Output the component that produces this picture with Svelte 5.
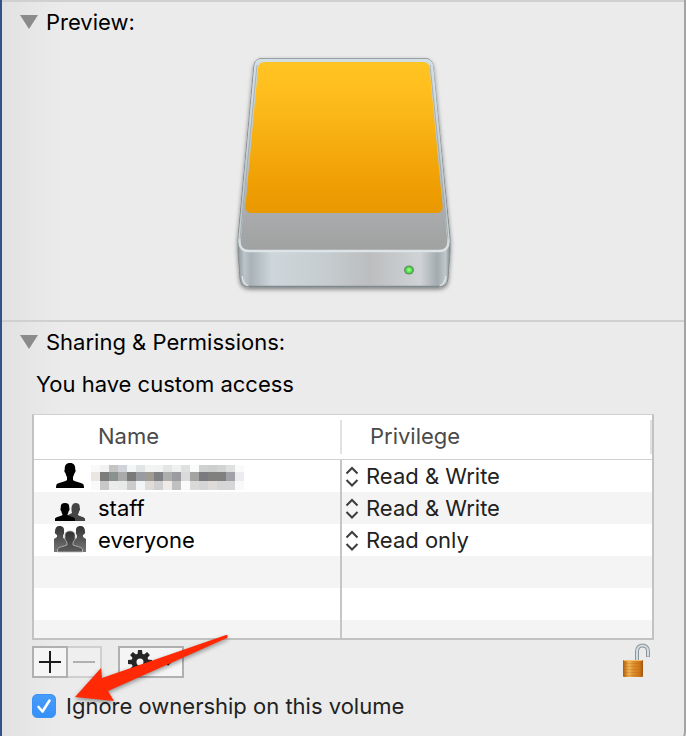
<script>
  let ignoreOwnership = $state(true);
  let previewOpen = $state(true);
  let sharingOpen = $state(true);

  let entries = $state([
    { icon: 'user', name: '', privilege: 'Read & Write' },
    { icon: 'group', name: 'staff', privilege: 'Read & Write' },
    { icon: 'everyone', name: 'everyone', privilege: 'Read only' }
  ]);

  const privileges = ['Read & Write', 'Read only', 'Write only (Drop Box)', 'No Access'];

  // Pixelated user name, one colour per mosaic tile
  const tileWidth = 9;
  const mosaic = [
    { y: 0, height: 7, tiles: ['#f9f9f9', '#f2f2f2', '#c4c5c2', '#d0d3da', '#f4f5f5', '#e2e5e5', '#f3f3f3', '#f1f2f2', '#e4e6e6', '#f0f0f0', '#dfe1e1', '#fafbfb', '#cfd1d0', '#cccfce', '#d1d4d3', '#dfe0e0', '#f9fafa'] },
    { y: 7, height: 9, tiles: ['#eae6e1', '#7c7c7b', '#8a9291', '#aaaaab', '#7a7a7a', '#999ba3', '#a09b93', '#7e8082', '#acadad', '#9a9ca0', '#dadada', '#a3a3a1', '#7b7b7f', '#80817f', '#80817e', '#a1a2a9', '#eaecf0'] },
    { y: 16, height: 9, tiles: ['#f9f9f9', '#c8c8c8', '#eaebed', '#e8e9e9', '#cbcbcb', '#f3f4f8', '#dddcd8', '#d0d0d3', '#edeae8', '#bfc0c0', '#fafafa', '#dadad9', '#d5d5d5', '#dfdbd8', '#d5d6d6', '#d6d6d8', '#f9f9f9'] }
  ];
</script>

{#snippet triangle(open)}
  <svg class="triangle" class:closed={!open} width="18" height="14" viewBox="0 0 18 14" aria-hidden="true">
    <path d="M0 0H18L9 14Z" fill="#8b8b8b" />
  </svg>
{/snippet}

<main class="info">
  <section>
    <h2>
      <button class="disclosure" aria-expanded={previewOpen} onclick={() => (previewOpen = !previewOpen)}>
        {@render triangle(previewOpen)}
        Preview:
      </button>
    </h2>
    {#if previewOpen}
      <div class="preview">
        <svg width="240" height="260" viewBox="0 0 240 260" role="img" aria-label="External drive">
          <defs>
            <linearGradient id="label" x1="0" y1="0" x2="0" y2="1">
              <stop offset="0" stop-color="#ffc423" />
              <stop offset="0.2" stop-color="#ffbe1e" />
              <stop offset="0.8" stop-color="#ef9f04" />
              <stop offset="1" stop-color="#ea9800" />
            </linearGradient>
            <linearGradient id="top" x1="0" y1="0" x2="0" y2="1">
              <stop offset="0" stop-color="#cfdde2" />
              <stop offset="0.6" stop-color="#b7bfc2" />
              <stop offset="0.8" stop-color="#a9abac" />
              <stop offset="1" stop-color="#a0a1a1" />
            </linearGradient>
            <linearGradient id="front" x1="0" y1="0" x2="1" y2="0">
              <stop offset="0" stop-color="#8f989c" />
              <stop offset="0.03" stop-color="#bcc5c9" />
              <stop offset="0.06" stop-color="#a9b2b6" />
              <stop offset="0.16" stop-color="#cdd6da" />
              <stop offset="0.4" stop-color="#c6cdd0" />
              <stop offset="0.62" stop-color="#bcbdbf" />
              <stop offset="0.86" stop-color="#cfd3d6" />
              <stop offset="0.94" stop-color="#a3abaf" />
              <stop offset="0.98" stop-color="#c0c8cb" />
              <stop offset="1" stop-color="#858d91" />
            </linearGradient>
            <linearGradient id="rim" x1="0" y1="0" x2="0" y2="1">
              <stop offset="0" stop-color="#d2e0e6" />
              <stop offset="0.8" stop-color="#bcc6ca" />
              <stop offset="1" stop-color="#dce4e7" />
            </linearGradient>
            <radialGradient id="led">
              <stop offset="0" stop-color="#b4ffa0" />
              <stop offset="0.6" stop-color="#5cec52" />
              <stop offset="1" stop-color="#3cc53c" />
            </radialGradient>
            <filter id="soft" x="-10%" y="-10%" width="120%" height="125%">
              <feDropShadow dx="0" dy="2" stdDeviation="2" flood-color="#000" flood-opacity="0.45" />
            </filter>
          </defs>
          <path
            d="M39 16.500H202Q209 16.500 210 24L227 196V209L225 237Q224 245 215 245H27Q18 245 17 237L15 209V196L31 24Q32 16.500 39 16.500Z"
            fill="url(#front)" stroke="#858b8e" stroke-width="1" filter="url(#soft)"
          />
          <path
            d="M39 18H202Q208 18 209 24L225.500 198Q226 209 216 209H26Q16 209 16.500 198L32.500 24Q33 18 39 18Z"
            fill="url(#top)" stroke="url(#rim)" stroke-width="2.500"
          />
          <path d="M34 23L17 197M207 23L225 197" stroke="#899397" stroke-width="0.800" opacity="0.700" />
          <path d="M42 20H200Q206 20 206.500 26L219.500 164Q220 171 213 171H29Q22 171 22.500 164L35 26Q35.500 20 42 20Z" fill="url(#label)" />
          <path d="M25 243.500Q20 242 19 234M217 243.500Q222 242 223 234" fill="none" stroke="#e3e9eb" stroke-width="1.200" />
          <path d="M26 244.500H216" stroke="#80898c" stroke-width="1.500" />
          <ellipse cx="186" cy="228" rx="5" ry="4.500" fill="#6c8a6d" />
          <ellipse cx="186" cy="228" rx="3.800" ry="3.500" fill="url(#led)" />
        </svg>
      </div>
    {/if}
  </section>

  <section>
    <h2>
      <button class="disclosure" aria-expanded={sharingOpen} onclick={() => (sharingOpen = !sharingOpen)}>
        {@render triangle(sharingOpen)}
        Sharing &amp; Permissions:
      </button>
    </h2>
    {#if sharingOpen}
      <p>You have custom access</p>
      <div class="sharing">
        <table>
          <colgroup>
            <col class="name-col" />
            <col />
          </colgroup>
          <thead>
            <tr>
              <th scope="col">Name</th>
              <th scope="col" class="privilege-head">Privilege</th>
            </tr>
          </thead>
          <tbody>
            {#each entries as entry}
              <tr>
                <td>
                  <div class="name">
                    <svg class="person" width="34" height="28" viewBox="0 0 34 28" aria-hidden="true">
                      {#if entry.icon === 'user'}
                        <path d="M17 1C21 1 22.500 3.500 22.200 7.500C23 7.700 22.600 10.500 21.600 11C21 13 20.300 14 20 15V18C22 20 29 20.500 30.500 22.500Q31 24 31 26H3Q3 24 3.500 22.500C5 20.500 12 20 14 18V15C13.500 14 13 13 12.400 11C11.400 10.500 11 7.700 11.800 7.500C11.500 3.500 13 1 17 1Z" fill="#000" />
                      {:else if entry.icon === 'group'}
                        <path d="M22.500 9C26 9 27 11 26.700 14C27.500 14.500 27 16.500 26.200 17C26 19 25 19.500 25 21C27 22.500 31 22.800 32 24.500V27H15V21L19 19C18 16 18 9 22.500 9Z" fill="#444" />
                        <path d="M12 9C15.500 9 16.500 11 16.200 14C17 14.500 16.500 16.500 15.700 17C15.500 19 14.500 19.500 14.500 21C16.500 22.500 21 22.800 22 24.500V27H2V24.500C3 22.800 7.500 22.500 9.500 21C9.500 19.500 8.500 19 8.300 17C7.500 16.500 7 14.500 7.800 14C7.500 11 8.500 9 12 9Z" fill="#000" />
                      {:else}
                        <defs>
                          <linearGradient id="back" x1="0" y1="0" x2="0" y2="1">
                            <stop offset="0" stop-color="#333" />
                            <stop offset="1" stop-color="#777" />
                          </linearGradient>
                          <linearGradient id="head" x1="0" y1="0" x2="0" y2="1">
                            <stop offset="0" stop-color="#303030" />
                            <stop offset="1" stop-color="#5c5c5c" />
                          </linearGradient>
                        </defs>
                        <path d="M6.500 0C10 0 11.500 2 11 6C11.500 7 11 8 10.200 9V12L17 16V26H1V13L4 11V9C2 8 1.500 6.500 2 5.500C2 2 3.500 0 6.500 0Z" fill="url(#back)" />
                        <path d="M27.500 0C24 0 22.500 2 23 6C22.500 7 23 8 23.800 9V12L17 16V26H33V13L30 11V9C32 8 32.500 6.500 32 5.500C32 2 30.500 0 27.500 0Z" fill="url(#back)" />
                        <path d="M17 5C21 5 22.500 7.500 22 11C22.700 12 22 14 21 14.500L20 17V19C23 20.500 28 20.500 29.500 23V26H4.500V23C6 20.500 11 20.500 14 19V17L13 14.500C12 14 11.300 12 12 11C11.500 7.500 13 5 17 5Z" fill="url(#head)" stroke="#bdbdbd" stroke-width="0.800" />
                      {/if}
                    </svg>
                    {#if entry.name}
                      <span>{entry.name}</span>
                    {:else}
                      <svg class="mosaic" width="153" height="25" viewBox="0 0 153 25" shape-rendering="crispEdges" role="img" aria-label="Hidden name">
                        {#each mosaic as row}
                          {#each row.tiles as fill, i}
                            <rect x={i * tileWidth} y={row.y} width={tileWidth} height={row.height} {fill} />
                          {/each}
                        {/each}
                      </svg>
                    {/if}
                  </div>
                </td>
                <td>
                  <div class="privilege">
                    <svg width="14" height="22" viewBox="0 0 14 22" aria-hidden="true">
                      <path d="M1.500 8.500L7 3L12.500 8.500M1.500 15L7 20.500L12.500 15" fill="none" stroke="#3c3c3c" stroke-width="2" />
                    </svg>
                    <select aria-label="Privilege for {entry.name || 'owner'}" bind:value={entry.privilege}>
                      {#each privileges as privilege}
                        <option>{privilege}</option>
                      {/each}
                    </select>
                  </div>
                </td>
              </tr>
            {/each}
            <tr><td></td><td></td></tr>
            <tr><td></td><td></td></tr>
            <tr class="cut"><td></td><td></td></tr>
          </tbody>
        </table>

        <div class="toolbar">
          <button class="square" aria-label="Add">
            <svg width="24" height="24" viewBox="0 0 24 24"><path d="M12 1V23M1 12H23" stroke="#1c1c1c" stroke-width="2" /></svg>
          </button>
          <button class="square remove" aria-label="Remove" disabled>
            <svg width="24" height="24" viewBox="0 0 24 24"><path d="M1 12H23" stroke="#b0b0b0" stroke-width="2" /></svg>
          </button>
          <button class="action" aria-label="Action">
            <svg width="24" height="24" viewBox="-12 -12 24 24">
              {#each [0, 45, 90, 135, 180, 225, 270, 315] as angle}
                <path d="M-2.500 -7L-2 -12H2L2.500 -7Z" transform="rotate({angle})" fill="#262626" />
              {/each}
              <circle r="6" fill="none" stroke="#262626" stroke-width="5" />
            </svg>
            <svg width="12" height="8" viewBox="0 0 12 8"><path d="M1.500 1.500L6 6L10.500 1.500" fill="none" stroke="#1c1c1c" stroke-width="2.500" /></svg>
          </button>
          <button class="lock" aria-label="Lock">
            <svg width="28" height="36" viewBox="0 0 28 36">
              <defs>
                <linearGradient id="brass" x1="0" y1="0" x2="1" y2="0">
                  <stop offset="0" stop-color="#a95a12" />
                  <stop offset="0.1" stop-color="#c9781c" />
                  <stop offset="0.3" stop-color="#f0b65a" />
                  <stop offset="0.5" stop-color="#e0912f" />
                  <stop offset="0.85" stop-color="#cc7416" />
                  <stop offset="1" stop-color="#9c550e" />
                </linearGradient>
              </defs>
              <path d="M15 19V9.500C15 1.500 26 1.500 26 9.500V15" fill="none" stroke="#89949b" stroke-width="4" />
              <path d="M15 19V9.500C15 1.500 26 1.500 26 9.500V14.500" fill="none" stroke="#d4dde2" stroke-width="2" />
              <rect x="1" y="18" width="20" height="17" rx="1" fill="url(#brass)" />
              <path d="M1 21.500H21M1 24.500H21M1 27.500H21M1 30.500H21M1 33.500H21" stroke="#a95f12" stroke-width="1" opacity="0.250" />
              <path d="M2 18.500H20" stroke="#f3bd67" stroke-width="1" />
            </svg>
          </button>
        </div>

        <label class="ignore">
          <input type="checkbox" bind:checked={ignoreOwnership} />
          {#if ignoreOwnership}
            <svg class="tick" width="24" height="24" viewBox="0 0 24 24" aria-hidden="true">
              <path d="M6.500 13L10.500 17.500L17.500 6.500" fill="none" stroke="#fff" stroke-width="2.600" stroke-linecap="round" stroke-linejoin="round" />
            </svg>
          {/if}
          <span>Ignore ownership on this volume</span>
        </label>

        <svg class="arrow" width="170" height="80" viewBox="0 0 170 80" aria-hidden="true">
          <path d="M13 67L39 38L40 48L164 5Q167 5 165 8L46 61L52 71Z" fill="#ff2a05" />
        </svg>
      </div>
    {/if}
  </section>
</main>

<style>
  :global(body) {
    margin: 0;
    background: #d8d8d8;
  }

  .info {
    box-sizing: border-box;
    border-left: 2px solid #2f5288;
    border-right: 2px solid #a3a3a3;
    border-bottom-right-radius: 8px;
    background: linear-gradient(90deg, #e2e2e2, #ebebeb 60px);
    font-family: Inter, 'Open Sans', sans-serif;
    font-size: 22px;
    line-height: 32px;
    color: #000;
    overflow: hidden;
  }

  section {
    border-top: 2px solid #d0d0d0;
  }

  h2 {
    margin: 0;
    font: inherit;
  }

  button,
  select {
    font: inherit;
    color: inherit;
  }

  .disclosure {
    display: flex;
    align-items: center;
    gap: 8px;
    height: 40px;
    padding: 0 18px;
    border: 0;
    background: none;
  }

  .triangle.closed {
    transform: rotate(-90deg);
  }

  .preview {
    display: flex;
    justify-content: center;
    padding-bottom: 18px;
  }

  .preview svg {
    display: block;
  }

  p {
    margin: 0 34px;
    padding: 6px 0 14px;
  }

  .sharing {
    position: relative;
    padding: 0 30px 18px;
  }

  table {
    width: 100%;
    table-layout: fixed;
    border-collapse: separate;
    border-spacing: 0;
    border: 2px solid #c2c2c2;
    border-top: 1px solid #d0d0d0;
    background: #fff;
  }

  .name-col {
    width: 308px;
  }

  th {
    box-sizing: border-box;
    height: 45px;
    padding: 0 0 2px 64px;
    border-bottom: 1px solid #d0d0d0;
    background: linear-gradient(#e2e2e2, #e2e2e2) right center / 2px 34px no-repeat;
    color: #4a4a4a;
    font-weight: 400;
    text-align: left;
  }

  .privilege-head {
    padding-left: 28px;
  }

  td {
    box-sizing: border-box;
    height: 32px;
    padding: 0;
  }

  td:first-child {
    border-right: 2px solid #c6c6c6;
  }

  tbody tr:nth-child(even) {
    background: #f4f4f4;
  }

  .cut td {
    height: 18px;
  }

  .name {
    display: flex;
    align-items: center;
    gap: 11px;
    height: 32px;
    padding-left: 19px;
  }

  .mosaic {
    margin: 2px 0 0 -7px;
  }

  .privilege {
    display: flex;
    align-items: center;
    gap: 7px;
    height: 32px;
    padding-left: 3px;
    color: #222;
  }

  select {
    flex: 1;
    height: 32px;
    padding: 0;
    border: 0;
    background: none;
    appearance: none;
  }

  .toolbar {
    display: flex;
    padding-top: 6px;
  }

  .square,
  .action {
    box-sizing: border-box;
    display: flex;
    align-items: center;
    justify-content: center;
    width: 36px;
    height: 32px;
    padding: 0;
    border: 2px solid #b0b0b0;
    background: #f5f5f5;
  }

  .remove {
    width: 34px;
    border-color: #cfcfcf;
    border-left: 0;
    background: #efefef;
  }

  .action {
    gap: 10px;
    width: 66px;
    margin-left: 16px;
  }

  .lock {
    height: 36px;
    margin: -4px 4px 0 auto;
    padding: 0;
    border: 0;
    background: none;
  }

  .lock svg {
    display: block;
  }

  .ignore {
    display: grid;
    grid-template-columns: 24px auto;
    column-gap: 10px;
    align-items: center;
    width: fit-content;
    margin-top: 12px;
    color: #222;
  }

  .ignore input {
    grid-area: 1 / 1;
    width: 24px;
    height: 24px;
    margin: 0;
    border: 1px solid #b0b0b0;
    border-radius: 5px;
    background: #fff;
    appearance: none;
  }

  .ignore input:checked {
    border-color: #3b93f8;
    background: linear-gradient(#469cfa, #3690fa);
  }

  .tick {
    grid-area: 1 / 1;
    pointer-events: none;
  }

  /* Callout drawn over the controls */
  .arrow {
    position: absolute;
    left: 60px;
    bottom: 30px;
    filter: drop-shadow(0 2px 2px rgba(0, 0, 0, 0.4));
    pointer-events: none;
  }
</style>
